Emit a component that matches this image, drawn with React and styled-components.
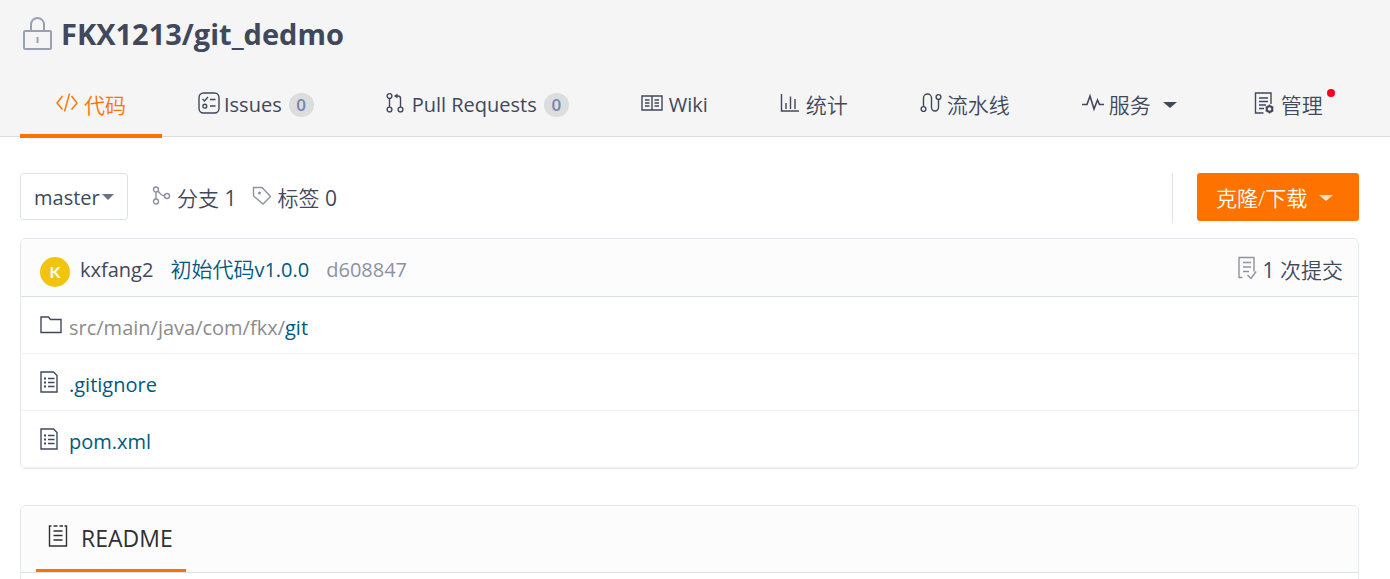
import React from "react";
import styled, { createGlobalStyle, css } from "styled-components";

const color = {
  ink: "#40485b",
  muted: "#8c92a4",
  accent: "#fe7300",
  link: "#005980",
  line: "#e3e9ed",
  panel: "#fcfcfc",
};

const Global = createGlobalStyle`
  *, *::before, *::after { box-sizing: border-box; }
  body {
    margin: 0;
    background: #fff;
    color: ${color.ink};
    font-family: "Open Sans", "Noto Sans CJK SC", sans-serif;
    font-size: 20px;
    line-height: 28px;
  }
  a { color: inherit; text-decoration: none; }
  button, select { font: inherit; color: inherit; cursor: pointer; }
  ul, h1, h2, p { margin: 0; padding: 0; list-style: none; font-weight: inherit; }
`;

const Header = styled.header`
  background: #f5f5f5;
  border-bottom: 1px solid #dcddde;
`;

const TitleRow = styled.div`
  display: flex;
  align-items: center;
  gap: 8px;
  padding: 14px 22px 0;
`;

const Title = styled.h1`
  font-size: 29px;
  line-height: 40px;
  font-weight: 700;
`;

const Tabs = styled.nav`
  display: flex;
  margin: 18px 0 -2px 20px;
`;

const tabStyle = css`
  display: flex;
  align-items: center;
  height: 66px;
  padding: 4px 36px 0;
  border: 0;
  border-bottom: 4px solid ${(p) => (p.$active ? color.accent : "transparent")};
  background: none;
  color: ${(p) => (p.$active ? color.accent : "inherit")};
  white-space: nowrap;
  flex: none;
`;

const Tab = styled.a`
  ${tabStyle}
`;

const MenuTab = styled.button`
  ${tabStyle}
  padding-right: 41px;
`;

const Text = styled.span`
  position: relative;
  font-size: ${(p) => (p.$cjk ? 21 : 20)}px;
  font-weight: ${(p) => (p.$cjk ? 350 : 400)};
`;

const Num = styled.span`
  font-weight: 400;
`;

const Svg = styled.svg`
  flex: none;
  display: block;
  fill: none;
  stroke: currentColor;
  stroke-width: ${(p) => p.$stroke || 1.4};
  margin: 0 ${(p) => (p.$gap === undefined ? 6 : p.$gap)}px ${(p) => (p.$lift === undefined ? 4 : p.$lift)}px 0;
`;

const Caret = styled.span`
  flex: none;
  border: solid transparent;
  border-width: 6px 7px 0;
  border-top-color: currentColor;
  margin-left: 12px;
`;

const Count = styled.span`
  min-width: 25px;
  height: 24px;
  margin-left: 7px;
  border-radius: 12px;
  background: #dcddde;
  color: #7484b0;
  font-size: 17px;
  font-weight: 600;
  line-height: 24px;
  text-align: center;
`;

const Dot = styled.span`
  position: absolute;
  top: -2px;
  right: -12px;
  width: 8px;
  height: 8px;
  border-radius: 50%;
  background: #f5001d;
`;

const Main = styled.main`
  padding: 36px 31px 0 20px;
`;

const Toolbar = styled.div`
  display: flex;
  align-items: flex-start;
  margin-bottom: 15px;
`;

const BranchPicker = styled.label`
  position: relative;
  display: flex;
  align-items: center;
  width: 108px;
  height: 47px;
  margin-right: 24px;
`;

const BranchSelect = styled.select`
  appearance: none;
  width: 100%;
  height: 100%;
  padding: 2px 26px 0 13px;
  border: 1px solid #dce3e8;
  border-radius: 3px;
  background: #fff;
`;

const PickerCaret = styled.span`
  position: absolute;
  right: 14px;
  border: solid transparent;
  border-width: 6px 6px 0;
  border-top-color: #6b7284;
  pointer-events: none;
`;

const RefLink = styled.a`
  display: flex;
  align-items: center;
  height: 50px;
  margin-right: 16px;
`;

const CloneArea = styled.div`
  height: 50px;
  margin-left: auto;
  padding-left: 24px;
  border-left: 1px solid #dce3e8;
`;

const CloneButton = styled.button`
  display: flex;
  align-items: center;
  width: 162px;
  height: 48px;
  padding: 2px 19px 0;
  border: 0;
  border-radius: 3px;
  background: ${color.accent};
  color: #fff;
  white-space: nowrap;

  ${Caret} { color: #ffe0c4; }
`;

const Panel = styled.section`
  border: 1px solid ${color.line};
  border-radius: 6px;
  margin-bottom: 36px;
  overflow: hidden;
`;

const CommitBar = styled.div`
  display: flex;
  align-items: center;
  height: 58px;
  padding: 4px 15px 0 19px;
  background: ${color.panel};
  border-bottom: 1px solid #dce3e8;
`;

const Avatar = styled.span`
  width: 30px;
  height: 30px;
  margin: 4px 10px 0 0;
  border-radius: 50%;
  background: #f1c40f;
  color: #fff;
  font-family: Lato, sans-serif;
  font-size: 16px;
  font-weight: 700;
  line-height: 30px;
  text-align: center;
`;

const CommitLink = styled.a`
  margin-right: 17px;
  color: ${(p) => p.$tone || "inherit"};
`;

const CommitCount = styled.a`
  display: flex;
  align-items: center;
  margin-left: auto;
`;

const FileRow = styled.li`
  display: flex;
  align-items: center;
  height: 57px;
  padding: 6px 19px 0;
  border-bottom: 1px solid #eef2f5;
`;

const FileLink = styled.a`
  color: ${color.link};
`;

const Dim = styled.span`
  color: #8c8c8c;
`;

const ReadmeBar = styled.div`
  height: 67px;
  padding: 0 15px;
  background: ${color.panel};
  border-bottom: 1px solid #dce3e8;
`;

const ReadmeTab = styled.h2`
  display: flex;
  align-items: center;
  width: 150px;
  height: 66px;
  padding: 1px 12px 0;
  border-bottom: 3px solid ${color.accent};
  color: #303030;
  font-size: 23px;
`;

const ReadmeBody = styled.div`
  min-height: 24px;
`;

const Icon = ({ w, h, children, ...rest }) => (
  <Svg width={w} height={h} viewBox={`0 0 ${w} ${h}`} aria-hidden="true" {...rest}>
    {children}
  </Svg>
);

const LockIcon = () => (
  <Icon w={31} h={36} $stroke={2} $gap={0} $lift={0} color="#9b9fb2">
    <rect x="2" y="15" width="27" height="18" rx="1" />
    <path d="M9 15V8.500a6.500 6.500 0 0 1 13 0v6.500M15.500 21v6" />
  </Icon>
);

const CodeIcon = () => (
  <Icon w={22} h={22}>
    <path d="M6.500 4L1 11l5.500 6.500M15.500 4l5.500 7-5.500 6.500M13.500 1.500l-5 18" />
  </Icon>
);

const IssuesIcon = () => (
  <Icon w={22} h={22} $gap={4}>
    <rect x="1" y="1" width="20" height="20" rx="4.500" />
    <path d="M4.500 7l2 2 3.500-4M12 7.500h5.500M12 14h5.500" />
    <circle cx="6.800" cy="14.200" r="1.900" />
  </Icon>
);

const PullIcon = () => (
  <Icon w={18} h={22} $gap={8}>
    <circle cx="3.500" cy="4" r="2.400" />
    <circle cx="3.500" cy="17.500" r="2.400" />
    <circle cx="14.500" cy="17.500" r="2.400" />
    <path d="M3.500 6.400v8.700M14.500 15.100V6.500q0-2.500-2.500-2.500H9" />
    <path d="M11.500 1.500v5L8 4z" fill="currentColor" stroke="none" />
  </Icon>
);

const WikiIcon = () => (
  <Icon w={22} h={18}>
    <path d="M1 2h20v14H1zM11 2v14M4 6h4.500M4 9h4.500M4 12h4.500M13.500 6H18M13.500 9H18M13.500 12H18" />
  </Icon>
);

const StatsIcon = () => (
  <Icon w={20} h={22}>
    <path d="M1.500 2v17H19M6 17v-6M10.500 17V4.500M15 17V7" />
  </Icon>
);

const PipelineIcon = () => (
  <Icon w={22} h={22} $gap={5}>
    <circle cx="3.500" cy="17" r="2.400" />
    <circle cx="18.500" cy="5" r="2.400" />
    <path d="M3.500 14.600V6a4 4 0 0 1 8 0v9.500a3.500 3.500 0 0 0 7 0V7.400" />
  </Icon>
);

const PulseIcon = () => (
  <Icon w={22} h={22} $gap={5}>
    <path d="M0 12.500h5L8 4l4 13 3.500-9 2 4.500h4.500" strokeWidth="1.600" />
  </Icon>
);

const ManageIcon = () => (
  <Icon w={21} h={24}>
    <path d="M9.500 22H1.500V2h15.500v11M5 7h9M5 10.500h9M5 14h7M5 17.500h5" />
    <circle cx="15.500" cy="18" r="2.800" strokeWidth="2" />
    <path d="M15.500 13.500v2M15.500 20.500v2M11.600 15.750l1.700 1M17.700 19.250l1.700 1M11.600 20.250l1.700-1M17.700 16.750l1.700-1" />
  </Icon>
);

const BranchIcon = () => (
  <Icon w={20} h={22} $gap={5} color={color.muted}>
    <circle cx="4" cy="4.500" r="2.500" />
    <circle cx="4" cy="16.500" r="2.500" />
    <circle cx="15" cy="11" r="2.500" />
    <path d="M4 7v7M6 6l2.500 3q1.500 1.500 4 2" />
  </Icon>
);

const TagIcon = () => (
  <Icon w={20} h={22} $gap={5} color={color.muted}>
    <path d="M1.500 2.500h8.500l8.500 9-7.500 7.500L1.500 11z" />
    <circle cx="7.500" cy="8" r="1.500" fill="currentColor" stroke="none" />
  </Icon>
);

const CommitsIcon = () => (
  <Icon w={20} h={24} $gap={6} color={color.muted}>
    <path d="M5.500 21.500H2V1.500h15v14M6 6.500h8M6 11h8M6 15.500h6M10.500 19l3.500 3.500 5-7" />
  </Icon>
);

const FolderIcon = () => (
  <Icon w={22} h={20} $gap={7} $lift={6}>
    <path d="M1 2h7.500l2 2.500H21V17.500H1z" />
  </Icon>
);

const FileIcon = () => (
  <Icon w={18} h={22} $gap={11} $lift={6}>
    <path d="M1 1h12.500l3.500 3.500V21H1zM8 7.500h6.500M8 11.500h6.500M8 15.500h6.500" />
    <path d="M4 7.500h2M4 11.500h2M4 15.500h2" strokeWidth="2" />
  </Icon>
);

const ReadmeIcon = () => (
  <Icon w={20} h={24} $gap={13}>
    <path d="M3.500 2H1.500v20h17V2h-2M5.500 2h4M11.500 2h3.500M5.500 7h9M5.500 11.500h9M5.500 16h9" />
  </Icon>
);

export default function App() {
  return (
    <>
      <Global />
      <Header>
        <TitleRow>
          <LockIcon />
          <Title>
            <a href="#repo">FKX1213/git_dedmo</a>
          </Title>
        </TitleRow>
        <Tabs>
          <Tab href="#code" $active aria-current="page">
            <CodeIcon />
            <Text $cjk>代码</Text>
          </Tab>
          <Tab href="#issues">
            <IssuesIcon />
            <Text>Issues</Text>
            <Count>0</Count>
          </Tab>
          <Tab href="#pulls">
            <PullIcon />
            <Text>Pull Requests</Text>
            <Count>0</Count>
          </Tab>
          <Tab href="#wiki">
            <WikiIcon />
            <Text>Wiki</Text>
          </Tab>
          <Tab href="#stats">
            <StatsIcon />
            <Text $cjk>统计</Text>
          </Tab>
          <Tab href="#pipelines">
            <PipelineIcon />
            <Text $cjk>流水线</Text>
          </Tab>
          <MenuTab type="button" aria-haspopup="menu">
            <PulseIcon />
            <Text $cjk>服务</Text>
            <Caret />
          </MenuTab>
          <Tab href="#manage">
            <ManageIcon />
            <Text $cjk>
              管理
              <Dot />
            </Text>
          </Tab>
        </Tabs>
      </Header>
      <Main>
        <Toolbar>
          <BranchPicker>
            <BranchSelect aria-label="master" defaultValue="master">
              <option value="master">master</option>
            </BranchSelect>
            <PickerCaret />
          </BranchPicker>
          <RefLink href="#branches">
            <BranchIcon />
            <Text $cjk>
              分支 <Num>1</Num>
            </Text>
          </RefLink>
          <RefLink href="#tags">
            <TagIcon />
            <Text $cjk>
              标签 <Num>0</Num>
            </Text>
          </RefLink>
          <CloneArea>
            <CloneButton type="button" aria-haspopup="menu">
              <Text $cjk>克隆/下载</Text>
              <Caret />
            </CloneButton>
          </CloneArea>
        </Toolbar>
        <Panel>
          <CommitBar>
            <Avatar>K</Avatar>
            <CommitLink href="#author">kxfang2</CommitLink>
            <CommitLink href="#commit" $tone={color.link}>
              <Text $cjk>初始代码</Text>v1.0.0
            </CommitLink>
            <CommitLink href="#sha" $tone={color.muted}>
              d608847
            </CommitLink>
            <CommitCount href="#commits">
              <CommitsIcon />
              <Text $cjk>
                <Num>1</Num> 次提交
              </Text>
            </CommitCount>
          </CommitBar>
          <ul>
            <FileRow>
              <FolderIcon />
              <FileLink href="#src">
                <Dim>src/main/java/com/fkx/</Dim>git
              </FileLink>
            </FileRow>
            <FileRow>
              <FileIcon />
              <FileLink href="#gitignore">.gitignore</FileLink>
            </FileRow>
            <FileRow>
              <FileIcon />
              <FileLink href="#pom">pom.xml</FileLink>
            </FileRow>
          </ul>
        </Panel>
        <Panel>
          <ReadmeBar>
            <ReadmeTab>
              <ReadmeIcon />
              README
            </ReadmeTab>
          </ReadmeBar>
          <ReadmeBody />
        </Panel>
      </Main>
    </>
  );
}
